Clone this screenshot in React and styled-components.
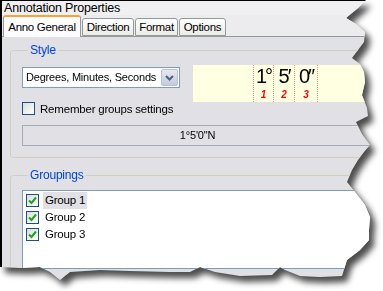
import React from 'react';
import styled, { createGlobalStyle } from 'styled-components';

const GlobalStyle = createGlobalStyle`
html, body {
    margin: 0;
    padding: 0;
    background: #ffffff;
}
body {
    font-family: "Liberation Sans", Arial, sans-serif;
    font-size: 11px;
    letter-spacing: -0.2px;
    color: #000;
}
`

// torn edge of the cut-out screenshot
const tornEdge = [
    [0, 0], [366, 0], [358, 8], [346, 18], [356, 24], [365, 32], [364, 42], [358, 50],
    [352, 58], [360, 64], [364, 72], [365, 82], [362, 95], [367, 108], [368, 116],
    [356, 122], [362, 134], [370, 145], [364, 152], [358, 160], [352, 170], [347, 182],
    [355, 192], [365, 205], [370, 217], [369, 230], [369, 240], [360, 250], [347, 260],
    [342, 276], [320, 277], [300, 276], [285, 270], [280, 267], [272, 275], [240, 276],
    [215, 272], [200, 267], [190, 272], [170, 272], [130, 271], [100, 270], [70, 272],
    [60, 280], [50, 272], [40, 267], [20, 268], [0, 267],
].map(([x, y]) => `${x}px ${y}px`).join(', ');

const tabs = [
    { label: 'Anno General', w: 78 },
    { label: 'Direction', w: 52 },
    { label: 'Format', w: 43 },
    { label: 'Options', w: 47 },
];
const cells = [
    { big: '1°', n: '1', w: 19 },
    { big: '5′', n: '2', w: 20 },
    { big: '0″', n: '3', w: 22 },
];
const groups = ['Group 1', 'Group 2', 'Group 3'];

function Check({ checked }) {
    return (
        <CheckBox>
            {checked && (
                <svg width="9" height="9" viewBox="0 0 9 9">
                    <path d="M1 4.5 L3.5 7 L8 1.5" fill="none" stroke="#21a121" strokeWidth="2" />
                </svg>
            )}
        </CheckBox>
    );
}

export default function App() {
    return (
        <Page>
            <GlobalStyle />
            <Shadow>
                <Dialog style={{ clipPath: `polygon(${tornEdge})` }}>
                    <TitleBar>Annotation Properties</TitleBar>
                    <TabStrip>
                        {tabs.map((t, i) => (
                            <Tab key={t.label} w={t.w} active={i === 0}>{t.label}</Tab>
                        ))}
                    </TabStrip>
                    <Panel>
                        <Group>
                            <Legend>Style</Legend>
                            <StyleRow>
                                <LeftCol>
                                    <Select>
                                        <SelectText>Degrees, Minutes, Seconds</SelectText>
                                        <SelectButton>
                                            <svg width="9" height="6" viewBox="0 0 9 6">
                                                <path d="M1 1 L4.5 4.5 L8 1" fill="none" stroke="#4d6185" strokeWidth="2" />
                                            </svg>
                                        </SelectButton>
                                    </Select>
                                    <CheckRow>
                                        <Check />
                                        <span>Remember groups settings</span>
                                    </CheckRow>
                                </LeftCol>
                                <Preview>
                                    {cells.map((c, i) => (
                                        <Cell key={c.n} w={c.w} last={i === cells.length - 1}>
                                            <BigText>{c.big}</BigText>
                                            <CellNum>{c.n}</CellNum>
                                        </Cell>
                                    ))}
                                </Preview>
                            </StyleRow>
                            <ReadOnly>1°5'0"N</ReadOnly>
                        </Group>
                        <Group grow>
                            <Legend>Groupings</Legend>
                            <List>
                                {groups.map((g, i) => (
                                    <ListItem key={g}>
                                        <Check checked />
                                        <ItemText selected={i === 0}>{g}</ItemText>
                                    </ListItem>
                                ))}
                            </List>
                        </Group>
                    </Panel>
                </Dialog>
            </Shadow>
        </Page>
    );
}

const Page = styled.div`
width: 383px;
height: 291px;
background: #ffffff;
overflow: hidden;
`

const Shadow = styled.div`
filter: drop-shadow(5px 6px 3px rgba(0, 0, 0, 0.7));
`

const Dialog = styled.div`
width: 383px;
height: 291px;
background: #e1e0e5;
border-top: 1px solid #000;
border-left: 2px solid #000;
box-sizing: border-box;
display: flex;
flex-direction: column;
`

const TitleBar = styled.div`
height: 14px;
line-height: 14px;
padding-left: 2px;
font-size: 12.5px;
background: #f0f0f2;
white-space: nowrap;
`

const TabStrip = styled.div`
height: 21px;
background: #ecebee;
display: flex;
align-items: flex-end;
padding-left: 1px;
border-bottom: 1px solid #919b9c;
`

const Tab = styled.div`
box-sizing: border-box;
width: ${p => p.w}px;
text-align: center;
height: ${p => (p.active ? '22px' : '18px')};
margin-bottom: ${p => (p.active ? '-1px' : '0')};
padding-top: ${p => (p.active ? '3px' : '1px')};
margin-right: 1px;
font-size: 11.5px;
letter-spacing: -0.3px;
border: 1px solid #919b9c;
border-bottom: ${p => (p.active ? 'none' : '1px solid #919b9c')};
border-top: ${p => (p.active ? '2px solid #f5a534' : '1px solid #919b9c')};
border-radius: 3px 3px 0 0;
background: ${p => (p.active ? '#fcfcfe' : 'linear-gradient(#ffffff, #ecebe6)')};
white-space: nowrap;
line-height: 15px;
`

const Panel = styled.div`
flex: 1;
padding: 6px 0 0 8px;
display: flex;
flex-direction: column;
gap: 10px;
min-height: 0;
`

const Group = styled.fieldset`
margin: 0;
width: 390px;
box-sizing: border-box;
padding: 0 0 11px 11px;
border: 1px solid #d0d0bf;
border-radius: 3px;
${p => p.grow && 'flex: 1;'}
`

const Legend = styled.legend`
color: #0046d5;
padding: 0 2px;
margin-left: 6px;
font-size: 12px;
line-height: 14px;
`

const StyleRow = styled.div`
display: flex;
gap: 13px;
margin-top: 9px;
`

const LeftCol = styled.div`
display: flex;
flex-direction: column;
gap: 14px;
padding-top: 1px;
flex: none;
`

const Select = styled.div`
width: 158px;
height: 21px;
box-sizing: border-box;
border: 1px solid #7f9db9;
background: #ffffff;
display: flex;
align-items: stretch;
overflow: hidden;
`

const SelectText = styled.div`
flex: 1;
min-width: 0;
padding-left: 3px;
line-height: 19px;
white-space: nowrap;
overflow: hidden;
`

const SelectButton = styled.div`
width: 15px;
flex: none;
margin: 1px;
border: 1px solid #b4c1d8;
border-radius: 2px;
background: linear-gradient(#e6e8f3, #c6cadc);
display: flex;
align-items: center;
justify-content: center;
`

const CheckRow = styled.label`
display: flex;
align-items: center;
gap: 5px;
white-space: nowrap;
height: 13px;
font-size: 11.5px;
`

const CheckBox = styled.span`
width: 13px;
height: 13px;
box-sizing: border-box;
flex: none;
border: 1px solid #1c5180;
background: linear-gradient(135deg, #dcdcd7, #ffffff);
display: flex;
align-items: center;
justify-content: center;
`

const Preview = styled.div`
flex: 1;
height: 37px;
margin-top: -1px;
background: #ffffe1;
padding-left: 60px;
display: flex;
`

const Cell = styled.div`
width: ${p => p.w}px;
border-left: 1px dotted #f08c8c;
${p => p.last && 'border-right: 1px dotted #f08c8c;'}
display: flex;
flex-direction: column;
align-items: center;
`

const BigText = styled.div`
font-size: 20px;
letter-spacing: -2px;
line-height: 20px;
margin-top: 1px;
white-space: nowrap;
`

const CellNum = styled.div`
color: #ff0000;
font-weight: bold;
font-style: italic;
font-size: 10px;
line-height: 12px;
margin-top: 3px;
`

const ReadOnly = styled.div`
margin-top: 10px;
width: 351px;
height: 21px;
box-sizing: border-box;
border: 1px solid #a5acb5;
text-align: center;
line-height: 19px;
`

const List = styled.div`
margin-top: 8px;
width: 360px;
height: 79px;
box-sizing: border-box;
border: 1px solid #7f9db9;
background: #ffffff;
padding: 1px 0 0 3px;
`

const ListItem = styled.div`
display: flex;
align-items: center;
height: 17px;
gap: 4px;
font-size: 11.5px;
`

const ItemText = styled.span`
padding: 0 2px;
line-height: 17px;
background: ${p => (p.selected ? '#e1e0e5' : 'transparent')};
`
